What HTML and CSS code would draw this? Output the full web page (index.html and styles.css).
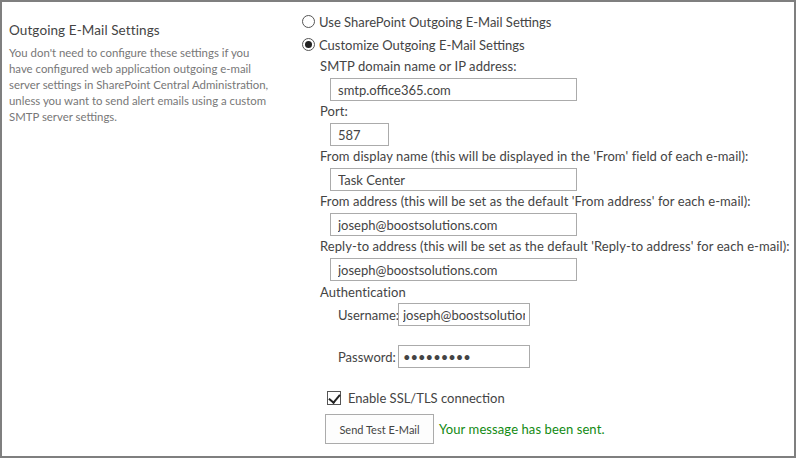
FILE: index.html
```html
<!DOCTYPE html>
<html>
<head>
<meta charset="utf-8">
<link rel="stylesheet" href="styles.css">
</head>
<body>
<div class="frame">
  <div class="left">
    <h3 class="title">Outgoing E-Mail Settings</h3>
    <p class="desc">You don't need to configure these settings if you<br>have configured web application outgoing e-mail<br>server settings in SharePoint Central Administration,<br>unless you want to send alert emails using a custom<br>SMTP server settings.</p>
  </div>
  <div class="right">
    <label class="radio-row"><input type="radio" name="mode" class="radio"> Use SharePoint Outgoing E-Mail Settings</label>
    <label class="radio-row"><input type="radio" name="mode" class="radio" checked> Customize Outgoing E-Mail Settings</label>
    <div class="fields">
      <div class="label">SMTP domain name or IP address:</div>
      <input class="text wide" type="text" value="smtp.office365.com">
      <div class="label">Port:</div>
      <input class="text port" type="text" value="587">
      <div class="label">From display name (this will be displayed in the 'From' field of each e-mail):</div>
      <input class="text wide" type="text" value="Task Center">
      <div class="label">From address (this will be set as the default 'From address' for each e-mail):</div>
      <input class="text wide" type="text" value="joseph@boostsolutions.com">
      <div class="label">Reply-to address (this will be set as the default 'Reply-to address' for each e-mail):</div>
      <input class="text wide" type="text" value="joseph@boostsolutions.com">
      <div class="label auth-title">Authentication</div>
      <div class="auth">
        <div class="auth-row"><span class="auth-label">Username:</span><input class="text auth-input" type="text" value="joseph@boostsolutions.com"></div>
        <div class="auth-row pw"><span class="auth-label">Password:</span><input class="text auth-input" type="password" value="123456789"></div>
      </div>
    </div>
    <label class="check-row"><input type="checkbox" class="check" checked> Enable SSL/TLS connection</label>
    <div class="send-row">
      <button class="btn">Send Test E-Mail</button>
      <span class="sent">Your message has been sent.</span>
    </div>
  </div>
</div>
</body>
</html>
```
FILE: styles.css
```css
* { box-sizing: border-box; }
html, body { margin: 0; padding: 0; background: #fff; }
body { font-family: "Lato", "Open Sans", sans-serif; color: #444; font-size: 13px; }
.frame {
  width: 796px;
  height: 458px;
  border: 2px solid #7f7f7f;
  display: grid;
  grid-template-columns: 298px 1fr;
}
.left { padding: 18px 0 0 7px; }
.title { margin: 0; font-weight: normal; font-size: 13.5px; line-height: 20px; color: #444; letter-spacing: 0.1px; }
.desc { margin: 5px 0 0; font-size: 11.4px; line-height: 16px; color: #777; white-space: nowrap; }
.right { padding: 8px 0 0 2px; display: flex; flex-direction: column; align-items: flex-start; }
.radio-row { display: flex; align-items: center; height: 23px; gap: 4px; }
.radio {
  appearance: none; -webkit-appearance: none;
  width: 13px; height: 13px; margin: 0; border: 1px solid #555; border-radius: 50%;
  background: #fff; display: grid; place-items: center;
}
.radio:checked::after { content: ""; width: 7px; height: 7px; border-radius: 50%; background: #222; }
.fields { padding-left: 18px; display: flex; flex-direction: column; align-items: flex-start; }
.label { line-height: 20px; height: 20px; margin-bottom: 2px; white-space: nowrap; letter-spacing: 0.08px; }
.auth-title { margin-top: 1px; margin-bottom: 1px; }
.text {
  font: inherit; color: #444; height: 23px; border: 1px solid #ababab; padding: 0 7px;
  margin: 0 0 0 10px; background: #fff; outline: none;
}
.wide { width: 247px; }
.port { width: 59px; }
.auth { padding-left: 18px; }
.auth-row { display: flex; align-items: center; height: 23px; }
.auth-row.pw { margin-top: 19px; }
.auth-label { width: 60px; }
.auth-input { width: 132px; margin: 0; padding: 0 4px; }
.check-row { display: flex; align-items: center; height: 22px; margin: 19px 0 0 25px; gap: 7px; }
.check {
  appearance: none; -webkit-appearance: none;
  width: 14px; height: 14px; margin: 0; border: 1px solid #555; background: #fff; position: relative;
}
.check:checked::after {
  content: ""; position: absolute; left: 3px; top: 0px; width: 5px; height: 9px;
  border: solid #222; border-width: 0 2px 2px 0; transform: rotate(40deg);
}
.send-row { display: flex; align-items: center; margin: 5px 0 0 23px; gap: 5px; }
.btn {
  font: inherit; font-size: 11px; color: #444; width: 109px; height: 30px;
  border: 1px solid #ababab; background: #fdfdfd; padding: 0; margin: 0;
}
.sent { color: #128a12; letter-spacing: 0.1px; }
```
